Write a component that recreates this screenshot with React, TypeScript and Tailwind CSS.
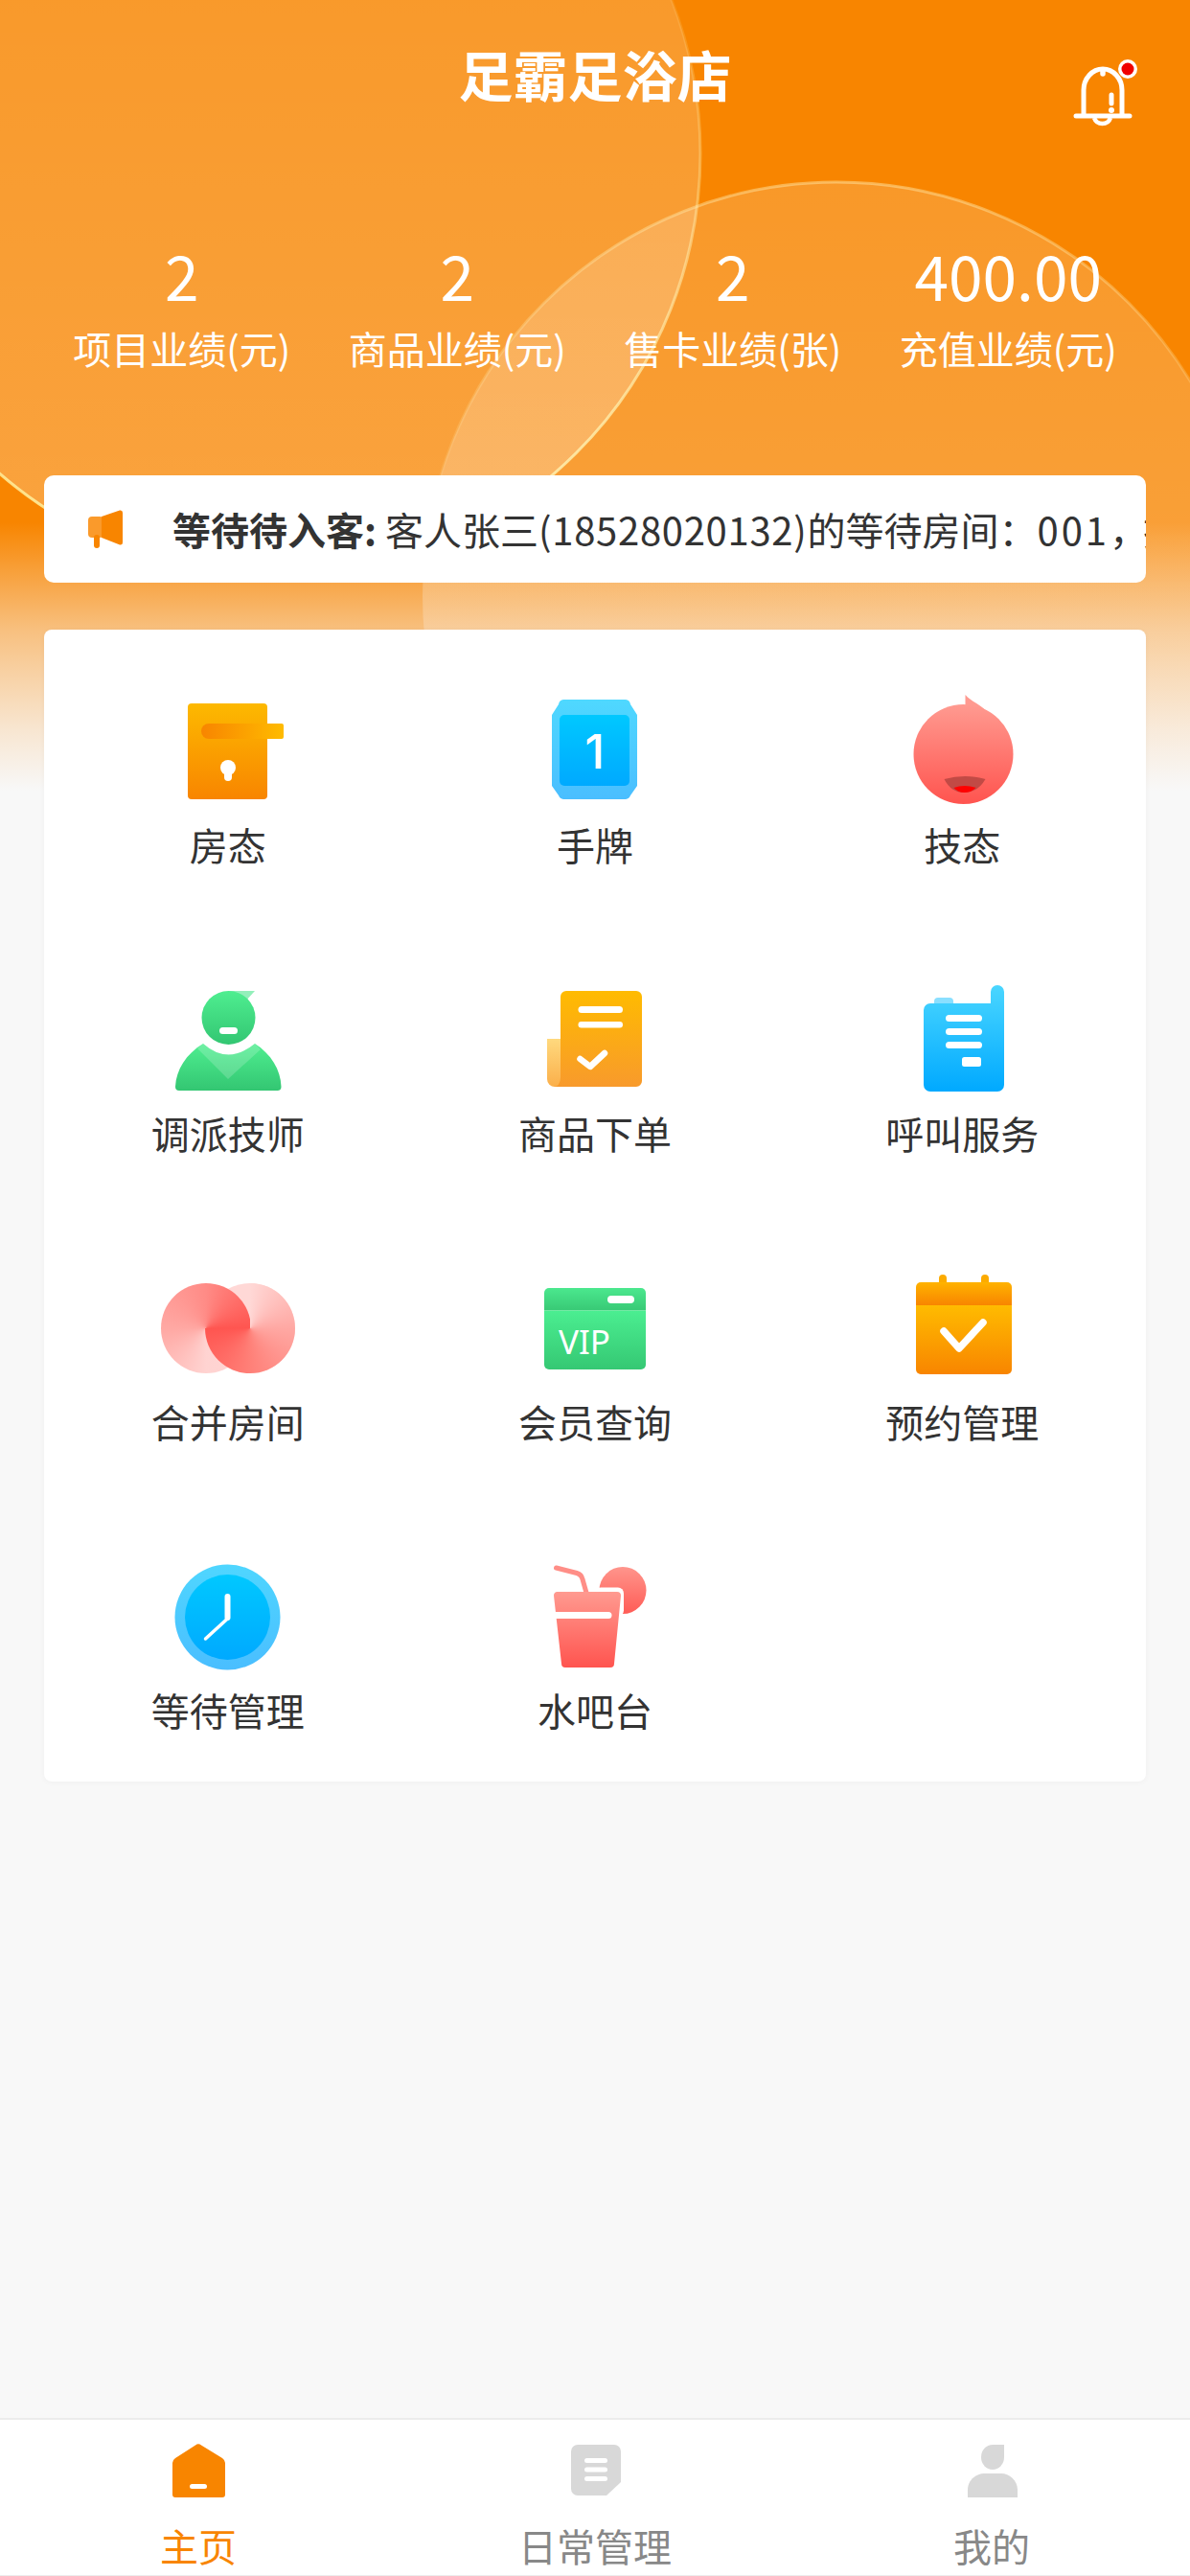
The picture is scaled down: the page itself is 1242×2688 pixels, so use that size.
import { ReactNode } from "react";

const fontStack = "font-['Noto_Sans_CJK_SC','Noto_Sans',sans-serif]";

// vertical gradient shared by most of the menu icons
function Grad({ id, from, to }: { id: string; from: string; to: string }) {
  return (
    <linearGradient id={id} x1="0" y1="0" x2="0" y2="1">
      <stop offset="0" stopColor={from} />
      <stop offset="1" stopColor={to} />
    </linearGradient>
  );
}

// lift moves the drawing up inside its 120px cell
function IconBox({ children, lift = 0 }: { children: ReactNode; lift?: number }) {
  return (
    <svg width="120" height="120" viewBox={`0 ${lift} 120 120`} className="overflow-visible">
      {children}
    </svg>
  );
}

function RoomIcon() {
  return (
    <IconBox>
      <defs>
        <Grad id="room" from="#fdb900" to="#f88500" />
        <linearGradient id="roomHandle" x1="0" y1="0" x2="1" y2="0">
          <stop offset="0" stopColor="#f88500" />
          <stop offset="1" stopColor="#ffbb00" />
        </linearGradient>
      </defs>
      <rect x="18" y="8" width="83" height="100" rx="4" fill="url(#room)" />
      <path d="M40 29H116a2 2 0 0 1 2 2V43a2 2 0 0 1-2 2H40a8 8 0 0 1 0-16z" fill="url(#roomHandle)" />
      <circle cx="60" cy="75" r="8" fill="#fff" />
      <rect x="56" y="76" width="8" height="13" rx="4" fill="#fff" />
    </IconBox>
  );
}

function WristTagIcon() {
  return (
    <IconBox>
      <defs>
        <Grad id="tagOuter" from="#4fd8ff" to="#4abeff" />
        <Grad id="tagInner" from="#00c8ff" to="#00a9ff" />
      </defs>
      <path
        d="M22 9a6 6 0 0 1 5-5H92a6 6 0 0 1 5 5l7 11V94l-7 10a6 6 0 0 1-5 4H27a6 6 0 0 1-5-4L15 94V20z"
        fill="url(#tagOuter)"
      />
      <rect x="23" y="20" width="73" height="74" rx="5" fill="url(#tagInner)" />
      <text x="60" y="76" textAnchor="middle" fontSize="50" fontWeight="500" fill="#fff" fontFamily="Inter, sans-serif">
        1
      </text>
    </IconBox>
  );
}

function TechIcon() {
  return (
    <IconBox>
      <defs>
        <Grad id="tech" from="#ff9a90" to="#ff544f" />
      </defs>
      <path d="M63.500 -1V12L85.500 16C77.500 8 69.500 6 63.500 -1z" fill="#ff9a90" />
      <circle cx="61.500" cy="61" r="52" fill="url(#tech)" />
      <path d="M41.500 87Q63.500 81 84.500 87Q76.500 101 62.500 101Q48.500 101 41.500 87z" fill="#c24a45" />
      <path d="M51.500 96Q62.500 92 74.500 96Q69.500 101 62.500 101Q55.500 101 51.500 96z" fill="#ff0000" />
    </IconBox>
  );
}

function DispatchIcon() {
  return (
    <IconBox lift={5}>
      <defs>
        <Grad id="dispatch" from="#4fee90" to="#33c672" />
      </defs>
      <path d="M60 12H88L78 23z" fill="#93efba" />
      <circle cx="60.500" cy="40" r="28" fill="url(#dispatch)" />
      <rect x="51" y="50" width="19" height="7" rx="3.500" fill="#fff" />
      <path
        d="M34 67Q60 90 88 67C105 78 115 94 115.500 112a4 4 0 0 1-4 4H9a4 4 0 0 1-4-4C6 94 16 78 34 67z"
        fill="url(#dispatch)"
      />
      <path d="M34 67Q60 90 88 67L94 73L60 104L28 72z" fill="#fff" fillOpacity="0.18" />
    </IconBox>
  );
}

function GoodsIcon() {
  return (
    <IconBox lift={5}>
      <defs>
        <Grad id="goods" from="#ffbb00" to="#f89a2c" />
        <Grad id="goodsFold" from="#ffd97e" to="#fbaf4a" />
      </defs>
      <path d="M10 62H30V112H18a8 8 0 0 1-8-8z" fill="url(#goodsFold)" />
      <path
        d="M30 12H103a6 6 0 0 1 6 6V106a6 6 0 0 1-6 6H16Q24 112 24 102V18a6 6 0 0 1 6-6z"
        fill="url(#goods)"
      />
      <rect x="42.500" y="28" width="46.500" height="7" rx="3.500" fill="#fff" />
      <rect x="42.500" y="44" width="46.500" height="6.500" rx="3.250" fill="#fff" />
      <path d="M44.500 83L55 91L70 77" fill="none" stroke="#fff" strokeWidth="6.500" strokeLinecap="round" strokeLinejoin="round" />
    </IconBox>
  );
}

function CallIcon() {
  return (
    <IconBox>
      <defs>
        <Grad id="call" from="#4ad6ff" to="#00a9ff" />
      </defs>
      <rect x="31" y="14" width="20" height="12" rx="4" fill="#8adfff" />
      <path
        d="M90 20V8a7 7 0 0 1 14 0V105a7 7 0 0 1-7 7H27a7 7 0 0 1-7-7V27a7 7 0 0 1 7-7z"
        fill="url(#call)"
      />
      <rect x="43" y="32" width="38" height="7" rx="3.500" fill="#fff" />
      <rect x="43" y="46" width="38" height="7" rx="3.500" fill="#fff" />
      <rect x="43" y="60" width="38" height="7" rx="3.500" fill="#fff" />
      <rect x="60" y="76" width="20" height="10" rx="2.500" fill="#fff" />
    </IconBox>
  );
}

// two interlocked discs: right disc, then left disc, then the right disc again
// with its upper-left quarter open so the left disc passes over it
function MergeIcon() {
  return (
    <div className="relative w-[120px] h-[120px]">
      <div className="absolute left-[36px] top-[11px] w-[94px] h-[94px] rounded-full bg-[#ffd8d6]" />
      <div className="absolute left-[-10px] top-[11px] w-[94px] h-[94px] rounded-full bg-[conic-gradient(from_90deg,#ffd8d6_0deg,#ffd3d1_90deg,#ffa8a3_180deg,#ff8b86_270deg,#ff5550_360deg)]" />
      <div className="absolute left-[36px] top-[11px] w-[94px] h-[94px] rounded-full bg-[conic-gradient(#ffd8d6_0deg,#ffa8a3_90deg,#ff8078_180deg,#ff5550_270deg,transparent_270deg)]" />
    </div>
  );
}

function VipIcon() {
  return (
    <IconBox>
      <defs>
        <Grad id="vipTop" from="#4be88e" to="#38c975" />
        <Grad id="vipBody" from="#4bee91" to="#35c873" />
      </defs>
      <path d="M12 16H108a5 5 0 0 1 5 5V39.500H7V21a5 5 0 0 1 5-5z" fill="url(#vipTop)" />
      <path d="M7 39.500H113V96a5 5 0 0 1-5 5H12a5 5 0 0 1-5-5z" fill="url(#vipBody)" />
      <rect x="73" y="24" width="28" height="8" rx="4" fill="#fff" />
      <text x="22" y="85" fontSize="35" fill="#fff" fontFamily="'Noto Sans', sans-serif">
        VIP
      </text>
    </IconBox>
  );
}

function CalendarIcon() {
  return (
    <IconBox>
      <defs>
        <Grad id="calTop" from="#ffb300" to="#f88500" />
        <Grad id="calBody" from="#ffbb00" to="#f88500" />
      </defs>
      <rect x="36" y="2" width="8" height="14" rx="4" fill="#fcab00" />
      <rect x="80" y="2" width="8" height="14" rx="4" fill="#fcab00" />
      <path d="M17 10H107a5 5 0 0 1 5 5V34H12V15a5 5 0 0 1 5-5z" fill="url(#calTop)" />
      <path d="M12 34H112V101a5 5 0 0 1-5 5H17a5 5 0 0 1-5-5z" fill="url(#calBody)" />
      <path d="M41 61L57 79L82 52" fill="none" stroke="#fff" strokeWidth="7.500" strokeLinecap="round" strokeLinejoin="round" />
    </IconBox>
  );
}

function ClockIcon() {
  return (
    <IconBox lift={5}>
      <defs>
        <Grad id="clockOuter" from="#4fd6ff" to="#4abeff" />
        <Grad id="clockInner" from="#00c8ff" to="#00a9ff" />
      </defs>
      <circle cx="59.500" cy="63.500" r="55" fill="url(#clockOuter)" />
      <circle cx="59.500" cy="63.500" r="44.500" fill="url(#clockInner)" />
      <path d="M59.500 42V64" stroke="#fff" strokeWidth="6" strokeLinecap="round" />
      <path d="M59.500 65L36.500 86" stroke="#fff" strokeWidth="3.500" strokeLinecap="round" />
    </IconBox>
  );
}

function DrinkIcon() {
  return (
    <IconBox lift={5}>
      <defs>
        <Grad id="drinkCup" from="#ff9a90" to="#ff544f" />
        <Grad id="drinkFruit" from="#ff958c" to="#ff5c56" />
      </defs>
      <path d="M19.500 12L41 17.500Q46 19 47 24L51 38" fill="none" stroke="#ff8e87" strokeWidth="5" strokeLinecap="round" />
      <circle cx="89" cy="35.500" r="24.500" fill="url(#drinkFruit)" />
      <rect x="60" y="32.500" width="30" height="30" rx="6" fill="#fff" />
      <path
        d="M20 37H83a4 4 0 0 1 4 4L80 112a4 4 0 0 1-4 4H29a4 4 0 0 1-4-4L17 41a4 4 0 0 1 3-4z"
        fill="url(#drinkCup)"
      />
      <path d="M15 58H74a3.500 3.500 0 0 1 0 7H15z" fill="#fff" />
    </IconBox>
  );
}

function HomeTabIcon() {
  return (
    <svg width="60" height="60" viewBox="0 0 60 60">
      <path
        d="M27 3.500Q30 1 33 3.500L55 17Q58 19 58 22V55a3 3 0 0 1-3 3H6a3 3 0 0 1-3-3V22Q3 19 6 17z"
        fill="#f88500"
      />
      <rect x="21" y="44" width="18" height="5" rx="2.500" fill="#fff" />
    </svg>
  );
}

function DailyTabIcon() {
  return (
    <svg width="60" height="60" viewBox="0 0 60 60">
      <path d="M5 10a7 7 0 0 1 7-7H50a7 7 0 0 1 7 7V42L42 56H12a7 7 0 0 1-7-7z" fill="#d8d8d8" />
      <rect x="19" y="17" width="24" height="5" rx="2.500" fill="#fff" />
      <rect x="19" y="26.500" width="24" height="5" rx="2.500" fill="#fff" />
      <rect x="19" y="36" width="24" height="5" rx="2.500" fill="#fff" />
    </svg>
  );
}

function MineTabIcon() {
  return (
    <svg width="60" height="60" viewBox="0 0 60 60">
      <path d="M31 3H43V16a12 13 0 0 1-24 0a12 13 0 0 1 12-13z" fill="#d8d8d8" />
      <path d="M5 58V50C5 40 14 33 22 33H40C48 33 57 40 57 50V58z" fill="#d8d8d8" />
    </svg>
  );
}

const stats = [
  { value: "2", label: "项目业绩(元)" },
  { value: "2", label: "商品业绩(元)" },
  { value: "2", label: "售卡业绩(张)" },
  { value: "400.00", label: "充值业绩(元)" },
];

const menu = [
  { label: "房态", icon: <RoomIcon /> },
  { label: "手牌", icon: <WristTagIcon /> },
  { label: "技态", icon: <TechIcon /> },
  { label: "调派技师", icon: <DispatchIcon /> },
  { label: "商品下单", icon: <GoodsIcon /> },
  { label: "呼叫服务", icon: <CallIcon /> },
  { label: "合并房间", icon: <MergeIcon /> },
  { label: "会员查询", icon: <VipIcon /> },
  { label: "预约管理", icon: <CalendarIcon /> },
  { label: "等待管理", icon: <ClockIcon /> },
  { label: "水吧台", icon: <DrinkIcon /> },
];

const tabs = [
  { label: "主页", icon: <HomeTabIcon />, active: true },
  { label: "日常管理", icon: <DailyTabIcon />, active: false },
  { label: "我的", icon: <MineTabIcon />, active: false },
];

function HeaderBackdrop() {
  return (
    <svg className="absolute left-0 top-0" width="1242" height="840" viewBox="0 0 1242 840">
      <defs>
        <linearGradient id="discOne" gradientUnits="userSpaceOnUse" x1="0" y1="0" x2="0" y2="600">
          <stop offset="0" stopColor="#fff" stopOpacity="0.17" />
          <stop offset="1" stopColor="#fff" stopOpacity="0.25" />
        </linearGradient>
        <linearGradient id="discOneEdge" gradientUnits="userSpaceOnUse" x1="0" y1="0" x2="0" y2="600">
          <stop offset="0" stopColor="#fff3b0" stopOpacity="0.1" />
          <stop offset="1" stopColor="#fff3a0" stopOpacity="0.95" />
        </linearGradient>
        <linearGradient id="discTwo" gradientUnits="userSpaceOnUse" x1="0" y1="190" x2="0" y2="700">
          <stop offset="0" stopColor="#fff" stopOpacity="0.16" />
          <stop offset="1" stopColor="#fff" stopOpacity="0.24" />
        </linearGradient>
        <linearGradient id="discTwoEdge" gradientUnits="userSpaceOnUse" x1="0" y1="190" x2="0" y2="600">
          <stop offset="0" stopColor="#ffedb0" stopOpacity="0.45" />
          <stop offset="1" stopColor="#ffedb0" stopOpacity="0" />
        </linearGradient>
        <linearGradient id="headerFade" gradientUnits="userSpaceOnUse" x1="0" y1="545" x2="0" y2="825">
          <stop offset="0" stopColor="#f8f8f8" stopOpacity="0" />
          <stop offset="0.225" stopColor="#f8f8f8" stopOpacity="0.29" />
          <stop offset="0.4" stopColor="#f8f8f8" stopOpacity="0.51" />
          <stop offset="0.55" stopColor="#f8f8f8" stopOpacity="0.65" />
          <stop offset="0.77" stopColor="#f8f8f8" stopOpacity="0.84" />
          <stop offset="1" stopColor="#f8f8f8" stopOpacity="1" />
        </linearGradient>
      </defs>
      <rect width="1242" height="840" fill="#f88500" />
      <circle cx="289" cy="160" r="442" fill="url(#discOne)" stroke="url(#discOneEdge)" strokeWidth="3" />
      <circle cx="873" cy="622" r="432" fill="url(#discTwo)" stroke="url(#discTwoEdge)" strokeWidth="3" />
      <rect width="1242" height="840" fill="url(#headerFade)" />
    </svg>
  );
}

export default function App() {
  return (
    <div className={`relative w-[1242px] h-[2688px] bg-[#f8f8f8] flex flex-col overflow-hidden ${fontStack}`}>
      <HeaderBackdrop />

      <header className="relative pt-[44px]">
        <h1 className="text-center text-[57px] leading-[64px] font-bold text-white">足霸足浴店</h1>
        <svg className="absolute left-[1110px] top-[56px]" width="90" height="84" viewBox="0 0 90 84">
          <path d="M21 65V38a20 22 0 0 1 40 0V65" fill="none" stroke="#fff" strokeWidth="5" />
          <path d="M41 21V17" stroke="#fff" strokeWidth="5.500" strokeLinecap="round" />
          <path d="M13 65H69" stroke="#fff" strokeWidth="5" strokeLinecap="round" />
          <path d="M32 67a9 9 0 0 0 17 0" fill="none" stroke="#fff" strokeWidth="4.500" />
          <path d="M50 43V52" stroke="#fff" strokeWidth="5" strokeLinecap="round" />
          <circle cx="50" cy="59" r="3" fill="#fff" />
          <circle cx="67" cy="16" r="10" fill="#fff" />
          <circle cx="67" cy="16" r="6.500" fill="#f00000" />
        </svg>
      </header>

      <section className="relative mt-[138px] px-[46px] grid grid-cols-4 text-white text-center">
        {stats.map((item) => (
          <div key={item.label}>
            <div className="text-[64px] leading-[80px]">{item.value}</div>
            <div className="mt-[9px] text-[40px] leading-[56px] whitespace-nowrap">{item.label}</div>
          </div>
        ))}
      </section>

      <section className="relative mt-[105px] mx-[46px] h-[112px] bg-white rounded-[10px] flex items-center overflow-hidden">
        <svg className="ml-[46px] shrink-0" width="36" height="40" viewBox="0 0 36 40">
          <rect y="7" width="16" height="22" rx="4" fill="#fa9a2b" />
          <rect x="6" y="26" width="6" height="14" rx="3" fill="#f88500" />
          <path d="M14 7L33 0.500Q36 0 36 3V34Q36 37 33 36.500L14 29z" fill="#f88500" />
        </svg>
        <p className="ml-[52px] text-[40px] leading-[56px] text-[#333] whitespace-nowrap">
          <span className="font-bold">等待待入客: </span>
          客人张三<span className="tracking-[0.7px]">(18528020132)</span>的等待房间：<span className="tracking-[3px]">001</span><span className="tracking-[-5px]">，</span>技师
        </p>
      </section>

      <main className="relative mt-[49px] mx-[46px] bg-white rounded-[8px] shadow-[0_1px_6px_rgba(0,0,0,0.04)] pt-[69px] pb-[47px] grid grid-cols-3 gap-y-[118px]">
        {menu.map((item) => (
          <div key={item.label} className="flex flex-col items-center">
            {item.icon}
            <span className="mt-[7px] text-[40px] leading-[56px] text-[#333]">{item.label}</span>
          </div>
        ))}
      </main>

      <div className="flex-1" />

      <nav className="relative grid grid-cols-3 bg-white border-t-2 border-b border-[#ececec] pt-[23px] pb-[3px]">
        {tabs.map((tab) => (
          <div key={tab.label} className="flex flex-col items-center">
            {tab.icon}
            <span className={tab.active ? "mt-[20px] text-[40px] leading-[56px] text-[#f88500]" : "mt-[20px] text-[40px] leading-[56px] text-[#888]"}>
              {tab.label}
            </span>
          </div>
        ))}
      </nav>
    </div>
  );
}
